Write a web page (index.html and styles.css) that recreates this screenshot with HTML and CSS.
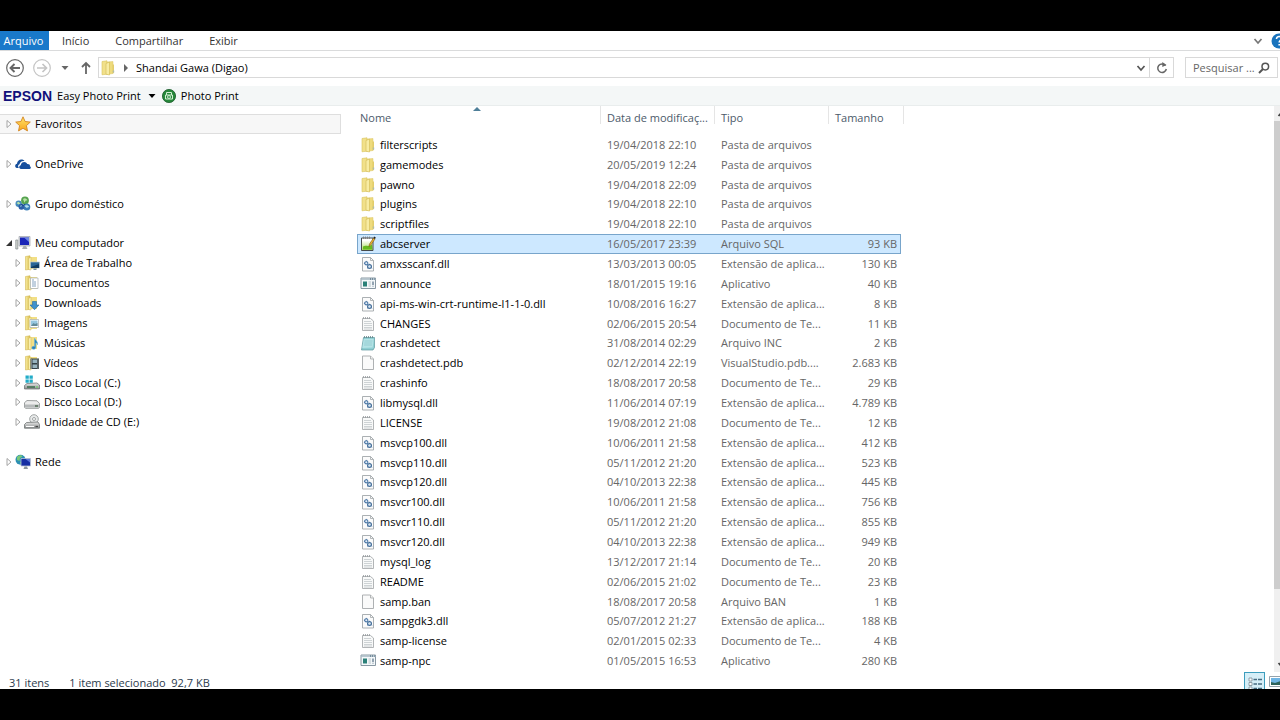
FILE: index.html
```html
<!DOCTYPE html>
<html lang="pt-BR">
<head>
<meta charset="utf-8">
<title>Shandai Gawa (Digao)</title>
<link rel="stylesheet" href="styles.css">
</head>
<body>
<svg class="defs" aria-hidden="true">
  <defs>
    <linearGradient id="gold" x1="0" x2="1" y1="0" y2="0"><stop offset="0" stop-color="#f8eca0"/><stop offset="1" stop-color="#d9bd4e"/></linearGradient>
    <linearGradient id="leaf" x1="0" x2="0" y1="0" y2="1"><stop offset=".2" stop-color="#fff"/><stop offset="1" stop-color="#a5d95a"/></linearGradient>
    <linearGradient id="metal" x1="0" x2="0" y1="0" y2="1"><stop offset="0" stop-color="#e8e8e8"/><stop offset="1" stop-color="#8a8d8e"/></linearGradient>
    <linearGradient id="starfill" x1="0" x2="0" y1="0" y2="1"><stop offset="0" stop-color="#ffe56a"/><stop offset="1" stop-color="#f8a51c"/></linearGradient>
  </defs>
  <symbol id="folder" viewBox="0 0 16 16"><path d="M2 1.500 7 .8v13.400l-5 .6z" fill="#f1e08a" stroke="#d8c25c" stroke-width=".6"/><path d="M7 2 13 1.500v12L7 14.500z" fill="#eedb7d" stroke="#dcc768" stroke-width=".5"/><path d="M6 3.500 9.500 2v13L6 14.200z" fill="#f8ecA3" stroke="#d2ba55" stroke-width=".6"/><path d="M12.500 4.500H14V13l-1.500.5z" fill="#e2cd6c"/><path d="M12.800 10.500h1.400v2h-1.400z" fill="#aebcae"/></symbol>
  <symbol id="lib" viewBox="0 0 16 16"><path d="M1.500 1.500 6 .8v13.400l-4.500.8z" fill="url(#gold)" stroke="#d3b956" stroke-width=".6"/><path d="M6 2h7v12H6z" fill="#f2df86"/><path d="M4.500 3.500 7 2v13l-2.500-.5z" fill="#f9efb0" stroke="#d0b650" stroke-width=".5"/></symbol>
  <symbol id="dll" viewBox="0 0 16 16"><path d="M2.500 1.500h8l3 3v10.500h-11z" fill="#fbfbfb" stroke="#a2a7aa" stroke-width=".9"/><path d="M10.500 1.500v3h3" fill="none" stroke="#a2a7aa" stroke-width=".8"/><circle cx="6.300" cy="7.300" r="1.600" fill="#e6f0f9" stroke="#4a76a6" stroke-width="1.100"/><circle cx="9.500" cy="10.500" r="1.900" fill="#e6f0f9" stroke="#426d9a" stroke-width="1.200"/><path d="M6.300 4.900v1M3.900 7.300h1M9.500 7.800v1M7.100 12.300l.8-.7M12.200 12.300l-.8-.6M9.500 10.500h.1" stroke="#426d9a" stroke-width=".8"/></symbol>
  <symbol id="txt" viewBox="0 0 16 16"><path d="M2.500 2.500h8l3 2.500v9.500h-11z" fill="#f8f9f9" stroke="#a9adaf" stroke-width=".9"/><path d="M3.500 1v2M5.500 1v2M7.500 1v2M9.500 1v2" stroke="#969b9e" stroke-width=".8"/><path d="M4 5.500h7M4 7.500h8M4 9.500h8M4 11.500h8M4 13h8" stroke="#c3c9cc" stroke-width=".8"/></symbol>
  <symbol id="blank" viewBox="0 0 16 16"><path d="M2.500 1h8l3 3v10.500h-11z" fill="#fafafa" stroke="#a5a8aa" stroke-width=".9"/><path d="M10.500 1v3h3" fill="#eee" stroke="#a5a8aa" stroke-width=".8"/></symbol>
  <symbol id="inc" viewBox="0 0 16 16"><path d="M3.500 2.500h11v10l-1.500 2.500H1.500z" fill="#8fcfd3" stroke="#5d979d" stroke-width=".7"/><path d="M3.700 4h10l-1 8.500-10.500.5z" fill="#b4e3e6"/><path d="M4.500 6h8M4.200 8h8M4 10h8" stroke="#83c0c7" stroke-width=".6"/><path d="M4.500 1v2M6.500 1v2M8.500 1v2M10.500 1v2M12.500 1v2" stroke="#658489" stroke-width=".8"/></symbol>
  <symbol id="exe" viewBox="0 0 16 16"><path d="M1 2h14.500v10.500H1z" fill="#f4f8fa" stroke="#7a8c98" stroke-width=".9"/><path d="M1 2.500h14.500v1.300H1z" fill="#a9bac5"/><path d="M10 3h1M12 3h1M14 3h.7" stroke="#34556c"/><path d="M3 5.500h4v5H3z" fill="#2a8078"/><path d="M8.500 6h2.500M8.500 8h2.500M8.500 10h2.500" stroke="#a5b2b9" stroke-width=".8"/><path d="M13 5.500V9M13 9.800v.7" stroke="#32506b"/></symbol>
  <symbol id="sql" viewBox="0 0 16 16"><path d="M1.500 2h11.500v12.500H1.500z" fill="url(#leaf)" stroke="#45494a"/><path d="M3.500 .5v2.500M5.500 .5v2.500M7.500 .5v2.500M9.500 .5v2.500" stroke="#777" stroke-width=".8"/><path d="M3 10.500c3-2 5 1 9-2v5H3z" fill="#67b91f"/><path d="m9 10.500.5-2.500L13.500 2l1.500 1-4.200 6z" fill="#f3b72b" stroke="#73531f" stroke-width=".6"/><path d="m13.300 2 .8-1.500 1.700 1L15 3z" fill="#222"/></symbol>
  <symbol id="star" viewBox="0 0 16 16"><path d="m8 .8 2.100 4.700 5.200.6-3.900 3.500 1.100 5.300L8 12.300l-4.500 2.600 1.100-5.300L.7 6.100l5.200-.6z" fill="url(#starfill)" stroke="#d38423" stroke-width=".9"/></symbol>
  <symbol id="cloud" viewBox="0 0 16 16"><path d="M1.800 12C-.5 11.500-.3 8.200 2 7.700 2.200 3.700 7 2 9.500 5 6 4.500 4.500 7 4.600 8.300 2.700 8.800 2.800 11 4 12z" fill="#164f9c"/><path d="M6 13c-2.500-.3-2.300-3.500-.2-3.800C6 5.500 11 4.600 12.300 8c2.300-.2 3 1.400 2.500 2.300 1.600.5 1.300 2.500-.2 2.700z" fill="#174f9e"/></symbol>
  <symbol id="home" viewBox="0 0 16 16"><circle cx="3.700" cy="7.800" r="3.200" fill="#4389bd"/><circle cx="10" cy="4.500" r="3.900" fill="#55a34f"/><circle cx="11.800" cy="11" r="3.500" fill="#3a7eb8"/><circle cx="6.500" cy="10.800" r="3" fill="#2c5fa8"/><path d="M8 3c2-2 4 0 4.500 1.300l-2 .4-1 2zM1.500 7l2-1.300 2 1.800-2 1z" fill="#b9e2a8"/><path d="m9.800 10 2-.8 2 1.500-2.200.8zM5 10.300l2.500-.8" fill="#b5e0ed" stroke="#b5e0ed" stroke-width=".7"/><path d="m6 8 2 2 2-2" stroke="#1d4e8c" fill="none"/></symbol>
  <symbol id="pc" viewBox="0 0 16 16"><path d="M.8 5h2v9h-2z" fill="#d7dbd5" stroke="#7d8586" stroke-width=".7"/><path d="M4 1.500h11v9.500H4z" fill="#d5d9dd" stroke="#9da2aa" stroke-width=".7"/><path d="M5 2.500h9v7.500H5z" fill="#1a25b8"/><path d="M9 2.500h5v4.500z" fill="#6b86e3"/><path d="M8.500 11h2.500l1.500 3H7z" fill="#a8adb2"/></symbol>
  <symbol id="desktop" viewBox="0 0 16 16"><use href="#lib"/><path d="M6.500 7h9v6h-9z" fill="#286596" stroke="#b8c7d1" stroke-width=".7"/><path d="m7 12 8-3v4H7z" fill="#113b62"/><path d="M9.500 13.500h3v1.500h-3z" fill="#7d919e"/></symbol>
  <symbol id="docs" viewBox="0 0 16 16"><use href="#lib"/><path d="M6.500 3h7.500v10.500H6.500z" fill="#fff" stroke="#a3acb1" stroke-width=".7"/><path d="M8 5h2M8 7h4M8 9h4M8 11h4" stroke="#648bae" stroke-width=".8"/></symbol>
  <symbol id="down" viewBox="0 0 16 16"><use href="#lib"/><path d="M8.500 6.500h4V10H15l-4.500 4.700L6 10h2.500z" fill="#3f91cc" stroke="#236a9f" stroke-width=".6"/></symbol>
  <symbol id="pics" viewBox="0 0 16 16"><use href="#lib"/><path d="M6 4.500h8.500v8H6z" fill="#fff" stroke="#a6acae" stroke-width=".7"/><path d="M7 5.500h6.500V11H7z" fill="#96c6df"/><path d="m7 11 2.500-3 1.500 1 2.500-1v3z" fill="#638a99"/></symbol>
  <symbol id="music" viewBox="0 0 16 16"><use href="#lib"/><path d="M11 3.500c.2 2 3.500 3 2.500 6.500-.2-1.500-1-2-1.700-2.200v4.500c0 2.700-4.300 2.500-4 .5.200-1.400 1.700-1.700 2.700-1.300v-8z" fill="#2683bd" stroke="#70b5da" stroke-width=".5"/></symbol>
  <symbol id="video" viewBox="0 0 16 16"><use href="#lib"/><path d="M6.500 3.500h8.500v10.500H6.500z" fill="#334044"/><path d="M8.500 4.500h4.500V8H8.500zM8.500 9.500h4.500V13H8.500z" fill="#98b4bf"/><path d="M7.500 4.500v9M14 4.500v9" stroke="#eee" stroke-width=".8" stroke-dasharray="1 1"/></symbol>
  <symbol id="diskc" viewBox="0 0 16 16"><path d="m3 8.500 10-.5 2.500 2v4H.5v-3.500z" fill="url(#metal)" stroke="#646a6b" stroke-width=".7"/><path d="M1.500 .5h3.300v3.300H1.500zM5.500 .5h3.300v3.300H5.500zM1.500 4.500h3.300v3.300H1.500zM5.500 4.500h3.300v3.300H5.500z" fill="#22acc8"/><path d="M3 12h8" stroke="#3b6c4e" stroke-width="1.500"/><path d="M12 12h2" stroke="#5d5"/></symbol>
  <symbol id="diskd" viewBox="0 0 16 16"><path d="m3 6.500 10 .3 2.500 2.700v4l-1 .8H1.500l-1-1V8.700z" fill="#ececec" stroke="#858989" stroke-width=".8"/><path d="M.8 10.500h14.500v3H1z" fill="#b6b9ba"/><path d="M11 12h3" stroke="#4f6b53" stroke-width="1.500"/></symbol>
  <symbol id="cd" viewBox="0 0 16 16"><circle cx="10" cy="5" r="4.300" fill="#e9ebeb" stroke="#8b9191" stroke-width=".8"/><circle cx="10" cy="5" r="1.500" fill="#fff" stroke="#8b9191" stroke-width=".8"/><path d="M2.500 8.500 14 8l1.500 2.500v3.700H.5v-3.700z" fill="url(#metal)" stroke="#707575" stroke-width=".8"/><path d="M2 12.500h8" stroke="#fff"/><path d="M11.500 12.500H14" stroke="#444" stroke-width="1.300"/></symbol>
  <symbol id="net" viewBox="0 0 16 16"><circle cx="5.500" cy="5.700" r="5" fill="#2c8fb3"/><path d="M2 3c2-2.500 5-2 5.500-.5L5 4 4.500 7 2 6zM5 8l3 .5-2 2z" fill="#79c977"/><path d="M6 4.500h9.500V12H6z" fill="#152ea3" stroke="#b9c4d6" stroke-width=".8"/><path d="M10.500 5H15v3.500z" fill="#5c76da"/><path d="M9.500 12.500h2.500l1 2.500H8.500z" fill="#8b959e"/></symbol>
  <symbol id="closed" viewBox="0 0 6 10"><path d="m1 1.500 4 3.500-4 3.500z" fill="#fff" stroke="#9b9b9b" stroke-width=".9"/></symbol>
  <symbol id="open" viewBox="0 0 6 10"><path d="M6 2v6H0z" fill="#333"/></symbol>
  <symbol id="chev" viewBox="0 0 10 10"><path d="m1.500 3 3.500 4 3.500-4" fill="none" stroke="currentColor" stroke-width="1.700"/></symbol>
  <symbol id="caret" viewBox="0 0 8 6"><path d="M.5 1h7L4 5z" fill="currentColor"/></symbol>
</svg>

<div class="window">
  <nav class="tabs" aria-label="Faixa de opções">
    <button class="tab tab-file">Arquivo</button>
    <button class="tab">Início</button>
    <button class="tab tab-wide">Compartilhar</button>
    <button class="tab">Exibir</button>
    <button class="plain collapse" aria-label="Expandir faixa"><svg class="i10"><use href="#chev"/></svg></button>
    <button class="plain help" aria-label="Ajuda"><svg viewBox="0 0 16 16"><circle cx="8" cy="8" r="7.500" fill="#1873bd"/><path d="M5.500 6c0-3.500 5.500-3 5 0-.3 1.500-2.300 1.500-2.300 3.500M8.200 11v1.500" fill="none" stroke="#fff" stroke-width="1.600"/></svg></button>
  </nav>

  <div class="address-row">
    <button class="plain nav-back" aria-label="Voltar"><svg viewBox="0 0 20 20"><circle cx="10" cy="10" r="8.300" fill="none" stroke="currentColor" stroke-width="1.200"/><path d="M15 10H6M9.500 6 5.500 10l4 4" fill="none" stroke="currentColor" stroke-width="1.900"/></svg></button>
    <button class="plain nav-forward" aria-label="Avançar"><svg viewBox="0 0 20 20"><circle cx="10" cy="10" r="8.300" fill="none" stroke="currentColor" stroke-width="1.200"/><path d="M5 10h9M10.500 6l4 4-4 4" fill="none" stroke="currentColor" stroke-width="1.700"/></svg></button>
    <button class="plain recent" aria-label="Locais recentes"><svg class="caret"><use href="#caret"/></svg></button>
    <button class="plain up" aria-label="Acima"><svg viewBox="0 0 12 14"><path d="M6 13V2M2 6l4-4 4 4" fill="none" stroke="currentColor" stroke-width="1.800"/></svg></button>
    <div class="path">
      <svg class="i16"><use href="#folder"/></svg>
      <svg class="crumb" viewBox="0 0 6 8"><path d="m1 0 4 4-4 4z" fill="#666"/></svg>
      <span class="path-name">Shandai Gawa (Digao)</span>
      <button class="plain path-drop" aria-label="Histórico"><svg class="i10"><use href="#chev"/></svg></button>
      <button class="plain refresh" aria-label="Atualizar"><svg viewBox="0 0 12 12"><path d="M9.500 3.600A4.300 4.300 0 1 0 10.300 7" fill="none" stroke="currentColor" stroke-width="1.500"/><path d="M6.300 0 10.500 3 6.300 5z" fill="currentColor"/></svg></button>
    </div>
    <div class="search">
      <input type="text" placeholder="Pesquisar ..." aria-label="Pesquisar">
      <svg viewBox="0 0 12 12"><circle cx="7.300" cy="4.600" r="3.300" fill="none" stroke="#555" stroke-width="1.500"/><path d="M5 7 1 11" stroke="#555" stroke-width="2"/></svg>
    </div>
  </div>

  <div class="toolbar">
    <span class="brand">EPSON</span>
    <button class="plain easy">Easy Photo Print <svg class="caret"><use href="#caret"/></svg></button>
    <button class="plain photo"><svg class="i14" viewBox="0 0 14 14"><circle cx="7" cy="7" r="6.600" fill="#26883a" stroke="#195a29" stroke-width=".8"/><path d="M3.500 6h7v4h-7zM4.500 6V3.500h5V6" fill="none" stroke="#d2efd3"/><circle cx="7" cy="8" r="1.500" fill="#31964a" stroke="#e6f6e5" stroke-width=".8"/></svg>Photo Print</button>
  </div>

  <main class="panes">
    <ul class="tree">
      <li class="node selected"><svg class="exp"><use href="#closed"/></svg><svg class="i16"><use href="#star"/></svg><span>Favoritos</span></li>
      <li role="presentation"></li>
      <li class="node"><svg class="exp"><use href="#closed"/></svg><svg class="i16"><use href="#cloud"/></svg><span>OneDrive</span></li>
      <li role="presentation"></li>
      <li class="node"><svg class="exp"><use href="#closed"/></svg><svg class="i16"><use href="#home"/></svg><span>Grupo doméstico</span></li>
      <li role="presentation"></li>
      <li class="node"><svg class="exp"><use href="#open"/></svg><svg class="i16"><use href="#pc"/></svg><span>Meu computador</span></li>
      <li class="node child"><svg class="exp"><use href="#closed"/></svg><svg class="i16"><use href="#desktop"/></svg><span>Área de Trabalho</span></li>
      <li class="node child"><svg class="exp"><use href="#closed"/></svg><svg class="i16"><use href="#docs"/></svg><span>Documentos</span></li>
      <li class="node child"><svg class="exp"><use href="#closed"/></svg><svg class="i16"><use href="#down"/></svg><span>Downloads</span></li>
      <li class="node child"><svg class="exp"><use href="#closed"/></svg><svg class="i16"><use href="#pics"/></svg><span>Imagens</span></li>
      <li class="node child"><svg class="exp"><use href="#closed"/></svg><svg class="i16"><use href="#music"/></svg><span>Músicas</span></li>
      <li class="node child"><svg class="exp"><use href="#closed"/></svg><svg class="i16"><use href="#video"/></svg><span>Vídeos</span></li>
      <li class="node child"><svg class="exp"><use href="#closed"/></svg><svg class="i16"><use href="#diskc"/></svg><span>Disco Local (C:)</span></li>
      <li class="node child"><svg class="exp"><use href="#closed"/></svg><svg class="i16"><use href="#diskd"/></svg><span>Disco Local (D:)</span></li>
      <li class="node child"><svg class="exp"><use href="#closed"/></svg><svg class="i16"><use href="#cd"/></svg><span>Unidade de CD (E:)</span></li>
      <li role="presentation"></li>
      <li class="node"><svg class="exp"><use href="#closed"/></svg><svg class="i16"><use href="#net"/></svg><span>Rede</span></li>
    </ul>

    <table class="files">
      <thead>
        <tr><th>Nome<svg class="sort" viewBox="0 0 8 4"><path d="M0 4 4 0l4 4z" fill="#4f7f99"/></svg></th><th>Data de modificaç...</th><th>Tipo</th><th>Tamanho</th></tr>
      </thead>
      <tbody>
        <tr><td><svg class="i16"><use href="#folder"/></svg>filterscripts</td><td>19/04/2018 22:10</td><td>Pasta de arquivos</td><td></td></tr>
        <tr><td><svg class="i16"><use href="#folder"/></svg>gamemodes</td><td>20/05/2019 12:24</td><td>Pasta de arquivos</td><td></td></tr>
        <tr><td><svg class="i16"><use href="#folder"/></svg>pawno</td><td>19/04/2018 22:09</td><td>Pasta de arquivos</td><td></td></tr>
        <tr><td><svg class="i16"><use href="#folder"/></svg>plugins</td><td>19/04/2018 22:10</td><td>Pasta de arquivos</td><td></td></tr>
        <tr><td><svg class="i16"><use href="#folder"/></svg>scriptfiles</td><td>19/04/2018 22:10</td><td>Pasta de arquivos</td><td></td></tr>
        <tr class="picked"><td><svg class="i16"><use href="#sql"/></svg>abcserver</td><td>16/05/2017 23:39</td><td>Arquivo SQL</td><td>93 KB</td></tr>
        <tr><td><svg class="i16"><use href="#dll"/></svg>amxsscanf.dll</td><td>13/03/2013 00:05</td><td>Extensão de aplica...</td><td>130 KB</td></tr>
        <tr><td><svg class="i16"><use href="#exe"/></svg>announce</td><td>18/01/2015 19:16</td><td>Aplicativo</td><td>40 KB</td></tr>
        <tr><td><svg class="i16"><use href="#dll"/></svg>api-ms-win-crt-runtime-l1-1-0.dll</td><td>10/08/2016 16:27</td><td>Extensão de aplica...</td><td>8 KB</td></tr>
        <tr><td><svg class="i16"><use href="#txt"/></svg>CHANGES</td><td>02/06/2015 20:54</td><td>Documento de Te...</td><td>11 KB</td></tr>
        <tr><td><svg class="i16"><use href="#inc"/></svg>crashdetect</td><td>31/08/2014 02:29</td><td>Arquivo INC</td><td>2 KB</td></tr>
        <tr><td><svg class="i16"><use href="#blank"/></svg>crashdetect.pdb</td><td>02/12/2014 22:19</td><td>VisualStudio.pdb....</td><td>2.683 KB</td></tr>
        <tr><td><svg class="i16"><use href="#txt"/></svg>crashinfo</td><td>18/08/2017 20:58</td><td>Documento de Te...</td><td>29 KB</td></tr>
        <tr><td><svg class="i16"><use href="#dll"/></svg>libmysql.dll</td><td>11/06/2014 07:19</td><td>Extensão de aplica...</td><td>4.789 KB</td></tr>
        <tr><td><svg class="i16"><use href="#txt"/></svg>LICENSE</td><td>19/08/2012 21:08</td><td>Documento de Te...</td><td>12 KB</td></tr>
        <tr><td><svg class="i16"><use href="#dll"/></svg>msvcp100.dll</td><td>10/06/2011 21:58</td><td>Extensão de aplica...</td><td>412 KB</td></tr>
        <tr><td><svg class="i16"><use href="#dll"/></svg>msvcp110.dll</td><td>05/11/2012 21:20</td><td>Extensão de aplica...</td><td>523 KB</td></tr>
        <tr><td><svg class="i16"><use href="#dll"/></svg>msvcp120.dll</td><td>04/10/2013 22:38</td><td>Extensão de aplica...</td><td>445 KB</td></tr>
        <tr><td><svg class="i16"><use href="#dll"/></svg>msvcr100.dll</td><td>10/06/2011 21:58</td><td>Extensão de aplica...</td><td>756 KB</td></tr>
        <tr><td><svg class="i16"><use href="#dll"/></svg>msvcr110.dll</td><td>05/11/2012 21:20</td><td>Extensão de aplica...</td><td>855 KB</td></tr>
        <tr><td><svg class="i16"><use href="#dll"/></svg>msvcr120.dll</td><td>04/10/2013 22:38</td><td>Extensão de aplica...</td><td>949 KB</td></tr>
        <tr><td><svg class="i16"><use href="#txt"/></svg>mysql_log</td><td>13/12/2017 21:14</td><td>Documento de Te...</td><td>20 KB</td></tr>
        <tr><td><svg class="i16"><use href="#txt"/></svg>README</td><td>02/06/2015 21:02</td><td>Documento de Te...</td><td>23 KB</td></tr>
        <tr><td><svg class="i16"><use href="#blank"/></svg>samp.ban</td><td>18/08/2017 20:58</td><td>Arquivo BAN</td><td>1 KB</td></tr>
        <tr><td><svg class="i16"><use href="#dll"/></svg>sampgdk3.dll</td><td>05/07/2012 21:27</td><td>Extensão de aplica...</td><td>188 KB</td></tr>
        <tr><td><svg class="i16"><use href="#txt"/></svg>samp-license</td><td>02/01/2015 02:33</td><td>Documento de Te...</td><td>4 KB</td></tr>
        <tr><td><svg class="i16"><use href="#exe"/></svg>samp-npc</td><td>01/05/2015 16:53</td><td>Aplicativo</td><td>280 KB</td></tr>
      </tbody>
    </table>

    <div class="scroll" aria-hidden="true">
      <svg class="arrow" viewBox="0 0 10 10"><path d="m1.500 7 3.500-4 3.500 4" fill="none" stroke="#444" stroke-width="1.800"/></svg>
      <div class="thumb"></div>
      <svg class="arrow" viewBox="0 0 10 10"><path d="m1.500 3 3.500 4 3.500-4" fill="none" stroke="#444" stroke-width="1.800"/></svg>
    </div>
  </main>

  <footer class="status">
    <span>31 itens</span>
    <span>1 item selecionado&nbsp; 92,7 KB</span>
    <button class="view view-on" aria-label="Detalhes"><svg viewBox="0 0 16 16"><path d="M2 2h3v3H2zM2 6.500h3v3H2zM2 11h3v3H2z" fill="#fff" stroke="#7b8b94" stroke-width=".8"/><path d="M6.500 3.500h3.500M11 3.500h4M6.500 8h3.500M11 8h4M6.500 12.500h3.500M11 12.500h4" stroke="#466b80" stroke-width="1.300"/></svg></button>
    <button class="view view-large" aria-label="Ícones grandes"><svg viewBox="0 0 16 16"><path d="M.5 1.500h15v10H.5z" fill="#fff" stroke="#95a3ac"/><path d="M2 3h12v7H2z" fill="#6fb5e4"/><path d="m2 7 4 1 8-3v5H2z" fill="#2d6259"/></svg></button>
  </footer>
</div>
</body>
</html>
```
FILE: styles.css
```css
* { box-sizing: border-box; }

body {
  margin: 0;
  background: #000;
  font: 11px/18px "Open Sans", "Noto Sans", sans-serif;
  color: #000;
}

.defs { position: absolute; width: 0; height: 0; }

svg { display: block; flex: none; }
.i16 { width: 16px; height: 16px; }
.i14 { width: 14px; height: 14px; }
.i10 { width: 10px; height: 10px; }
.caret { width: 8px; height: 6px; }

button, input { font: inherit; color: inherit; }
.plain { display: flex; align-items: center; justify-content: center; padding: 0; border: 0; background: none; }

.window {
  display: flex;
  flex-direction: column;
  min-height: 100vh;
  border: solid #000;
  border-width: 31px 0;
  background: #fff;
  overflow: hidden;
}

/* ribbon */
.tabs { display: flex; height: 20px; border-bottom: 1px solid #dadbdc; }
.tab { padding: 0 13px; border: 0; background: none; line-height: 18px; color: #333; }
.tab-file { width: 49px; padding: 0 5px 0 3px; background: #1979ca; color: #fff; }
.collapse { margin-left: auto; color: #777; }
.help { margin: 0 -7px 0 8px; }
.help svg { width: 16px; height: 16px; }

/* address */
.address-row { display: flex; align-items: center; height: 35px; padding: 0 2px 2px 5px; }
.nav-back svg, .nav-forward svg { width: 20px; height: 20px; }
.nav-back { color: #666; }
.nav-forward { margin-left: 7px; color: #c4c4c4; }
.recent { margin-left: 9px; color: #666; }
.up { margin-left: 11px; color: #666; }
.up svg { width: 12px; height: 14px; }
.path { display: flex; flex: 1; align-items: center; height: 21px; margin-left: 6px; padding-left: 1px; border: 1px solid #d9d9d9; }
.crumb { width: 6px; height: 8px; margin-left: 7px; }
.path-name { margin-left: 7px; }
.path-drop { margin-left: auto; padding-right: 3px; color: #555; }
.refresh { align-self: stretch; width: 24px; border-left: 1px solid #d9d9d9; color: #666; }
.refresh svg { width: 12px; height: 12px; }
.search { display: flex; align-items: center; width: 93px; height: 21px; margin-left: 11px; padding: 0 7px 0 7px; border: 1px solid #d9d9d9; }
.search input { flex: 1; min-width: 0; padding: 0; border: 0; background: none; }
.search input::placeholder { color: #666; opacity: 1; }
.search svg { width: 12px; height: 12px; }

/* toolbar */
.toolbar { display: flex; align-items: center; height: 20px; padding-left: 3px; background: #f4f7f7; border-bottom: 1px solid #e9eded; }
.brand { font: bold 14px/18px "Liberation Sans", sans-serif; color: #10107a; }
.easy { gap: 7px; margin-left: 5px; }
.photo { gap: 5px; margin-left: 6px; }

/* panes */
.panes { display: flex; flex: 1; }
.tree {
  display: grid;
  grid-template-rows: repeat(28, 1fr);
  width: 341px;
  margin: 0;
  padding: 8px 0 1px;
  list-style: none;
}
.node { display: flex; align-items: center; padding-left: 6px; }
.node.child { padding-left: 15px; }
.node span { margin-left: 4px; }
.exp { width: 6px; height: 10px; margin-right: 3px; }
.selected { background: #f7f7f7; box-shadow: inset -1px 1px #dedede, inset 0 -1px #dedede; }

.files { display: flex; flex-direction: column; margin-left: 16px; }
.files tr { display: grid; grid-template-columns: 244px 114px 114px 72px; align-items: center; }
.files thead tr { grid-template-columns: 244px 114px 114px 75px; }
.files tbody tr { margin-right: 3px; }
.files th, .files td { padding: 0 0 0 6px; text-align: left; font-weight: normal; white-space: nowrap; }
.files th { position: relative; height: 18px; padding-top: 3px; border-right: 1px solid #e5e5e5; color: #4c5a6a; }
.files th:first-child { padding-left: 3px; }
.sort { position: absolute; left: 116px; top: 1px; width: 8px; height: 4px; }
.files tbody { display: grid; flex: 1; grid-template-rows: repeat(27, 1fr); padding: 11px 0 1px; }
.files td { color: #666; }
.files td:first-child { display: flex; align-items: center; gap: 4px; padding-left: 3px; color: #000; }
.files td:last-child { padding-right: 4px; text-align: right; }
.picked { background: #cde8ff; box-shadow: inset 0 0 0 1px #78a5cb; }

.scroll { display: flex; flex-direction: column; width: 17px; margin: 0 -11px 0 auto; background: #f0f0f0; }
.arrow { width: 10px; height: 10px; margin: 3px 3px 2px; }
.thumb { flex: 1; margin-bottom: 68px; background: #cdcdcd; }

/* status */
.status { display: flex; height: 17px; padding-left: 9px; gap: 20px; line-height: 22px; overflow: hidden; color: #2b3a4c; }
.view { display: flex; justify-content: center; flex: none; width: 21px; height: 22px; padding: 3px 0 0; border: 0; background: none; }
.view svg { width: 16px; height: 16px; }
.view-on { margin-left: auto; border: 1px solid #3c9dbd; background: #d5eef7; }
.view-large { margin: 0 -7px 0 -19px; }
```
